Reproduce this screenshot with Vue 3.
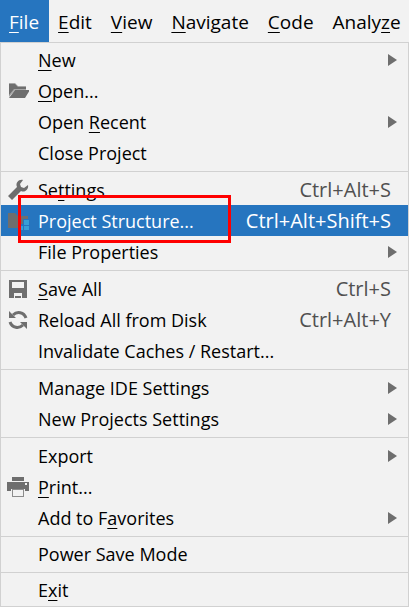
<script setup>
const menus = [
  { pre: '', key: 'F', post: 'ile', open: true },
  { pre: '', key: 'E', post: 'dit' },
  { pre: '', key: 'V', post: 'iew' },
  { pre: '', key: 'N', post: 'avigate' },
  { pre: '', key: 'C', post: 'ode' },
  { pre: 'Analy', key: 'z', post: 'e' },
]

const groups = [
  [
    { pre: '', key: 'N', post: 'ew', sub: true },
    { pre: '', key: 'O', post: 'pen...', icon: 'folder' },
    { pre: 'Open ', key: 'R', post: 'ecent', sub: true },
    { pre: 'Close Project', key: '', post: '' },
  ],
  [
    { pre: 'Se', key: 't', post: 'tings', icon: 'wrench', shortcut: 'Ctrl+Alt+S' },
    { pre: 'Project Structure...', key: '', post: '', icon: 'structure', shortcut: 'Ctrl+Alt+Shift+S', active: true },
    { pre: 'File Properties', key: '', post: '', sub: true },
  ],
  [
    { pre: '', key: 'S', post: 'ave All', icon: 'save', shortcut: 'Ctrl+S' },
    { pre: 'Reload All from Disk', key: '', post: '', icon: 'reload', shortcut: 'Ctrl+Alt+Y' },
    { pre: 'Invalidate Caches / Restart...', key: '', post: '' },
  ],
  [
    { pre: 'Manage IDE Settings', key: '', post: '', sub: true },
    { pre: 'New Projects Settings', key: '', post: '', sub: true },
  ],
  [
    { pre: 'Export', key: '', post: '', sub: true },
    { pre: '', key: 'P', post: 'rint...', icon: 'print' },
    { pre: 'Add to F', key: 'a', post: 'vorites', sub: true },
  ],
  [{ pre: 'Power Save Mode', key: '', post: '' }],
  [{ pre: 'E', key: 'x', post: 'it' }],
]
</script>

<template>
  <div class="window">
    <nav class="menubar">
      <button
        v-for="m in menus"
        :key="m.pre + m.key"
        type="button"
        class="menu"
        :class="{ open: m.open }"
      >{{ m.pre }}<span class="mnemonic">{{ m.key }}</span>{{ m.post }}</button>
    </nav>
    <div class="popup" role="menu">
      <div
        v-for="(group, g) in groups"
        :key="g"
        class="group"
        :class="{ single: group.length === 1 }"
        role="group"
      >
        <button
          v-for="item in group"
          :key="item.pre + item.key + item.post"
          type="button"
          role="menuitem"
          class="item"
          :class="{ active: item.active }"
        >
          <span class="icon">
            <svg v-if="item.icon === 'folder'" width="22" height="22" viewBox="0 0 22 22">
              <path fill="#a6a6a6" d="M2 3h6l3 3h8v4H8l-6 7z" />
              <path fill="#6e6e6e" d="M2 4h6l3 3h8v2H7l-5 6zM8 10h15l-5 8H2z" />
            </svg>
            <svg v-else-if="item.icon === 'wrench'" width="22" height="22" viewBox="0 0 22 22">
              <path fill="#6e6e6e" d="M16 1c-4-1-8 3-6 7L1 17l4 4L14 12c4 2 8-2 7-6l-4 3-3-1-1-3z" />
            </svg>
            <svg v-else-if="item.icon === 'structure'" width="22" height="22" viewBox="0 0 22 22">
              <path fill="#6e6e6e" d="M1 3h7l3 3h10v3h-5v5h-4v4H1z" />
              <path fill="#389fd6" d="M17 10h5v5h-5zM12 16h4v4h-4zM17 16h5v4h-5z" />
            </svg>
            <svg v-else-if="item.icon === 'save'" width="22" height="22" viewBox="0 0 22 22">
              <path fill="#6e6e6e" fill-rule="evenodd" d="M2 2h18v18H2zM5 4v6h12V4zM7 15v5h1v-3h6v3h1v-5z" />
              <path fill="#f2f2f2" d="M8 15h6v3H8z" />
            </svg>
            <svg v-else-if="item.icon === 'reload'" width="22" height="22" viewBox="0 0 22 22">
              <path fill="none" stroke="#6e6e6e" stroke-width="3" d="M6 6c4-4 11-3 13 3M16 16c-4 4-11 3-13-3" />
              <path fill="#6e6e6e" d="M2 2v7h7zM20 20v-7h-7z" />
            </svg>
            <svg v-else-if="item.icon === 'print'" width="22" height="22" viewBox="0 0 22 22">
              <path fill="#6e6e6e" fill-rule="evenodd" d="M5 1h12v4H5zM0 6h22v9h-4v-2H4v2H0zM18 7v2h2V7z" />
              <path fill="#8c8c8c" fill-rule="evenodd" d="M5 13h12v8H5zM6 14v6h10v-6z" />
            </svg>
          </span>
          <span class="label">{{ item.pre }}<span class="mnemonic">{{ item.key }}</span>{{ item.post }}</span>
          <span v-if="item.shortcut" class="shortcut">{{ item.shortcut }}</span>
          <svg v-if="item.sub" class="arrow" width="9" height="12" viewBox="0 0 9 12">
            <path fill="#6e6e6e" d="M0 0l9 6-9 6z" />
          </svg>
          <span v-if="item.active" class="highlight"></span>
        </button>
      </div>
    </div>
  </div>
</template>

<style>
body {
  background: #f2f2f2;
}
</style>

<style scoped>
.window {
  background: #f2f2f2;
  color: #000;
  font-family: "Open Sans", "Noto Sans", sans-serif;
  font-size: 18px;
  line-height: 24px;
}
button {
  margin: 0;
  border: 0;
  background: none;
  color: inherit;
  font: inherit;
  text-align: left;
  white-space: pre;
}
.menubar {
  display: flex;
  height: 42px;
  overflow: hidden;
  font-size: 19px;
}
.menu {
  flex: none;
  padding: 2px 10px 0 9px;
}
.menu.open {
  background: #2675bf;
  color: #fff;
}
.mnemonic {
  text-decoration: underline;
  text-decoration-thickness: 1px;
  text-underline-offset: 3px;
  text-decoration-skip-ink: none;
}
.popup {
  border: 1px solid #d1d1d1;
}
.group {
  padding: 2px 0 3px;
}
.group + .group {
  border-top: 1px solid #d1d1d1;
}
.group:first-child,
.group.single {
  padding-top: 1px;
}
.group:last-child {
  padding-bottom: 1px;
}
.item {
  position: relative;
  display: flex;
  align-items: center;
  width: 100%;
  height: 31px;
  padding: 0 17px 0 6px;
}
.item.active {
  background: #2675bf;
  color: #fff;
}
.icon {
  display: flex;
  flex: none;
  width: 31px;
}
.label {
  flex: 1;
}
.shortcut {
  color: #505050;
  font-size: 20px;
}
.active .shortcut {
  color: #fff;
}
.arrow {
  flex: none;
  margin-right: -6px;
}
.highlight {
  position: absolute;
  z-index: 1;
  top: -10px;
  left: 17px;
  box-sizing: border-box;
  width: 213px;
  height: 48px;
  border: 3px solid #f00;
}
</style>
